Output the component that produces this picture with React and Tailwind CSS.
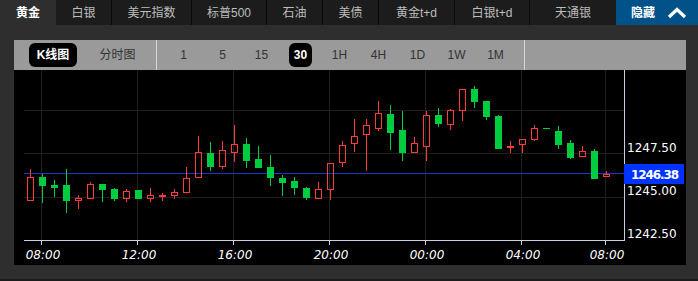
import React from 'react';

const tabs = [
  { label: '黄金', w: 'w-[56px]', active: true },
  { label: '白银', w: 'w-[55px]' },
  { label: '美元指数', w: 'w-[80px]', sep: true },
  { label: '标普500', w: 'w-[75px]', sep: true },
  { label: '石油', w: 'w-[56px]', sep: true },
  { label: '美债', w: 'w-[56px]', sep: true },
  { label: '黄金t+d', w: 'w-[76px]', sep: true },
  { label: '白银t+d', w: 'w-[75px]', sep: true },
  { label: '天通银', w: 'w-[87px]', sep: true },
];

const periods = ['1', '5', '15', '30', '1H', '4H', '1D', '1W', '1M'];

// [bodyTop, bodyBottom, wickTop, wickBottom, red]
const candles = [
  [177, 201, 169, 201, 1], [177, 186, 174, 203, 0], [185, 188, 180, 197, 0], [185, 201, 169, 213, 0],
  [198, 201, 195, 209, 1], [184, 199, 182, 199, 1], [184, 190, 184, 202, 0], [189, 199, 188, 201, 0],
  [191, 199, 189, 202, 1], [190, 199, 190, 199, 0], [195, 199, 188, 202, 1], [195, 197, 193, 201, 1],
  [192, 196, 189, 199, 1], [178, 193, 167, 193, 1], [152, 178, 136, 178, 1], [153, 167, 142, 171, 0],
  [150, 167, 141, 169, 1], [144, 153, 125, 162, 1], [144, 161, 138, 168, 0], [159, 168, 146, 168, 0],
  [167, 178, 155, 186, 0], [178, 183, 175, 196, 0], [181, 188, 177, 195, 0], [188, 198, 187, 200, 0],
  [189, 199, 182, 199, 1], [163, 190, 163, 200, 1], [145, 163, 141, 167, 1], [136, 144, 119, 152, 1],
  [125, 135, 119, 171, 1], [113, 129, 101, 131, 1], [114, 133, 105, 150, 0], [130, 153, 111, 161, 0],
  [143, 153, 137, 153, 1], [115, 147, 111, 161, 1], [115, 124, 108, 127, 0], [110, 125, 109, 130, 1],
  [89, 111, 89, 121, 1], [89, 102, 86, 108, 0], [101, 117, 101, 120, 0], [116, 149, 115, 149, 0],
  [146, 148, 141, 153, 1], [139, 145, 139, 153, 1], [128, 140, 125, 141, 1], [128, 129, 128, 129, 0],
  [131, 145, 126, 149, 0], [143, 158, 140, 159, 0], [151, 157, 146, 157, 1], [151, 179, 149, 179, 0],
  [174, 177, 171, 177, 1],
];

const RED = '#ff3b3b';
const GREEN = '#00cc3f';
const gridX = [41, 137, 233, 329, 425, 521, 605];
const timeLabels = ['08:00', '12:00', '16:00', '20:00', '00:00', '04:00', '08:00'];

function Candle({ c, i }) {
  const [top, bottom, wt, wb, red] = c;
  const L = 27 + 12 * i;
  const cx = L + 3.5;
  if (red) {
    return (
      <g stroke={RED} strokeWidth="1" fill="none">
        {wt < top && <line x1={cx} y1={wt} x2={cx} y2={top} />}
        {wb > bottom && <line x1={cx} y1={bottom} x2={cx} y2={wb} />}
        <rect x={L + 0.5} y={top + 0.5} width="6" height={Math.max(bottom - top - 1, 1)} />
      </g>
    );
  }
  return (
    <g>
      <line x1={cx} y1={wt} x2={cx} y2={wb} stroke={GREEN} strokeWidth="1" />
      <rect x={L} y={top} width="7" height={Math.max(bottom - top, 1)} fill={GREEN} />
    </g>
  );
}

function Chart() {
  return (
    <svg viewBox="14 70 672 195" width="672" height="195" className="block">
      <rect x="14" y="70" width="672" height="195" fill="#000" />
      {[110.5, 153.5, 197.5].map((y) => (
        <line key={y} x1="24" y1={y} x2="624" y2={y} stroke="#1e1e1e" strokeWidth="1" />
      ))}
      {gridX.map((x) => (
        <g key={x}>
          <line x1={x + 0.5} y1="70" x2={x + 0.5} y2="240" stroke="#1e1e1e" strokeWidth="1" />
          <line x1={x + 0.5} y1="240" x2={x + 0.5} y2="245" stroke="#c8d0e0" strokeWidth="1" />
        </g>
      ))}
      <line x1="24" y1="173.5" x2="624" y2="173.5" stroke="#1438c8" strokeWidth="1" />
      {candles.map((c, i) => (
        <Candle key={i} c={c} i={i} />
      ))}
      <line x1="24" y1="240.5" x2="624.5" y2="240.5" stroke="#c8d0e0" strokeWidth="1" />
      <line x1="624.5" y1="70" x2="624.5" y2="241" stroke="#c8d0e0" strokeWidth="1" />
      <g fill="#fff" fontFamily="DejaVu Sans, sans-serif" fontSize="12">
        <text x="627" y="151.5">1247.50</text>
        <text x="627" y="194.5">1245.00</text>
        <text x="627" y="237.5">1242.50</text>
      </g>
      <rect x="624" y="164" width="60" height="20" fill="#0033ff" />
      <text x="631" y="178.5" fill="#fff" fontFamily="DejaVu Sans, sans-serif" fontSize="12" fontWeight="bold" textLength="48">
        1246.38
      </text>
      <g fill="#fff" fontFamily="DejaVu Sans, sans-serif" fontSize="12" fontStyle="italic" textAnchor="middle">
        {gridX.map((x, i) => (
          <text key={i} x={x + 2} y="259">
            {timeLabels[i]}
          </text>
        ))}
      </g>
    </svg>
  );
}

export default function App() {
  return (
    <div className="w-[698px] h-[281px] bg-[#2e2e2e] overflow-hidden font-['Liberation_Sans','Noto_Sans_CJK_SC',sans-serif]">
      <div className="flex h-[25px] bg-[#1c1c1c] text-[12px]">
        {tabs.map((t) => (
          <div
            key={t.label}
            className={`${t.w} flex items-center justify-center ${t.active ? 'bg-[#2e2e2e] text-white font-bold' : 'text-[#bdbdbd]'} ${t.sep ? 'border-l border-[#0a0a0a]' : ''}`}
          >
            {t.label}
          </div>
        ))}
        <div className="flex-1 bg-[#02528a] flex items-center justify-between pl-[15px] pr-[11px] text-white font-bold">
          <span>隐藏</span>
          <svg width="20" height="12" viewBox="0 0 20 12">
            <path d="M2 10 L10 2.5 L18 10" fill="none" stroke="#fff" strokeWidth="3.2" />
          </svg>
        </div>
      </div>

      <div className="ml-[14px] mt-[15px] w-[672px]">
        <div className="flex h-[30px] bg-[#9a9a9a] text-[12px] text-[#333]">
          <div className="w-[142px] flex items-center pl-[15px]">
            <div className="w-[48px] h-[24px] rounded-[6px] bg-black text-white font-bold flex items-center justify-center">
              K线图
            </div>
            <div className="flex-1 text-center pl-[2px]">分时图</div>
          </div>
          <div className="w-px bg-[#d8d8d8]" />
          <div className="flex items-center pl-[7px] pr-[9px]">
            {periods.map((p) => (
              <div key={p} className="w-[39px] flex justify-center">
                {p === '30' ? (
                  <span className="w-[23px] h-[24px] rounded-[6px] bg-black text-white font-bold flex items-center justify-center">
                    {p}
                  </span>
                ) : (
                  <span>{p}</span>
                )}
              </div>
            ))}
          </div>
          <div className="w-px bg-[#d8d8d8]" />
          <div className="flex-1" />
        </div>
        <Chart />
      </div>
      <div className="h-[14px]" />
      <div className="h-[2px] bg-[#1c1c1c]" />
    </div>
  );
}
